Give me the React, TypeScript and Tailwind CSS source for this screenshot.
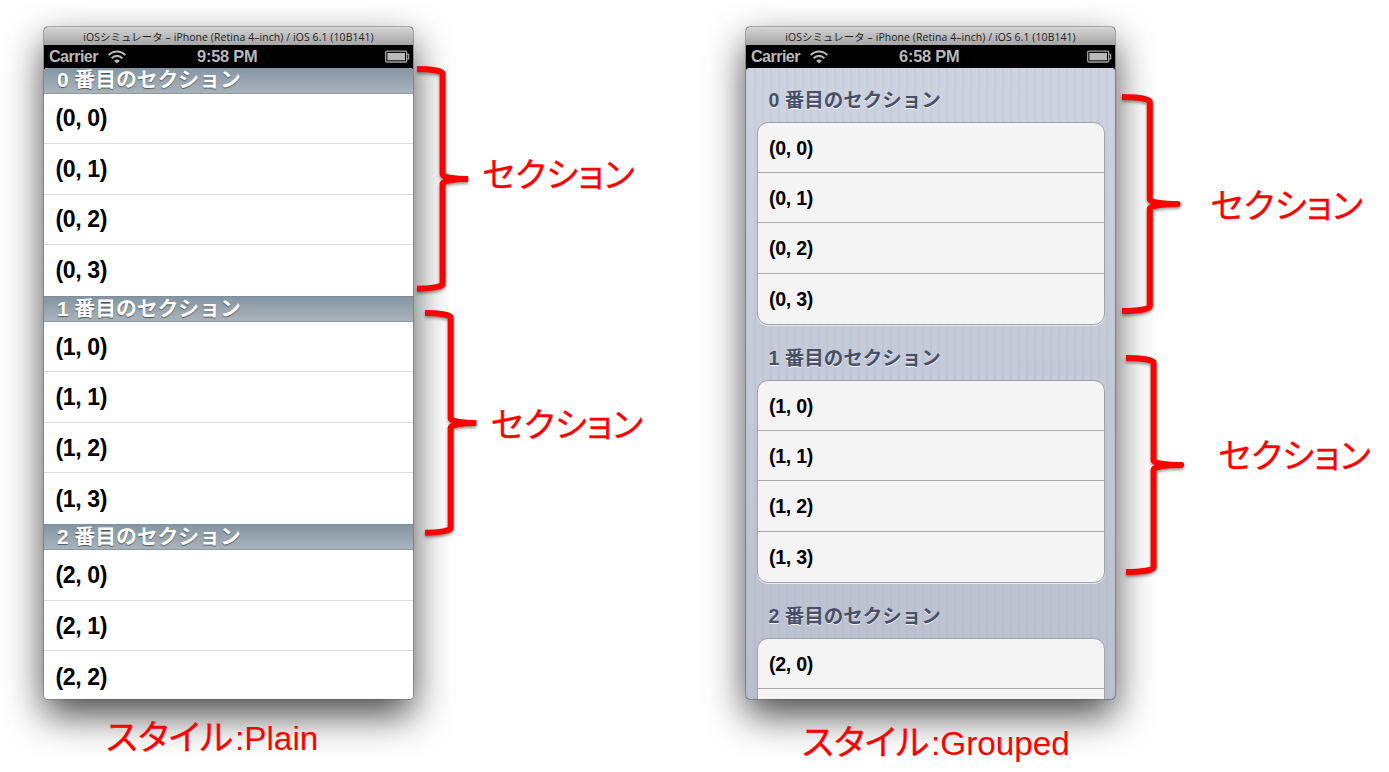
import React from "react";

const SANS = "font-['Liberation_Sans','Noto_Sans_CJK_JP',sans-serif]";

function StatusBar({ time }: { time: string }) {
  return (
    <div className="flex h-[23px] shrink-0 items-center bg-black pl-[5px] text-[#b9b9b9]">
      <span className="w-[50px] text-[16.2px] font-bold leading-[23px] tracking-[-0.6px]">Carrier</span>
      <svg width="18" height="14" viewBox="0 0 18 14" className="ml-[9px]" fill="none" stroke="currentColor">
        <path d="M0.7 5.1 C5.3 0.3 12.7 0.3 17.3 5.1" strokeWidth="2.1" />
        <path d="M3.7 8.2 C6.8 5.1 11.2 5.1 14.3 8.2" strokeWidth="2.1" />
        <path d="M9 13.6 L6.1 10.7 C7.9 9.1 10.1 9.1 11.9 10.7 Z" fill="currentColor" stroke="none" />
      </svg>
      <span className="ml-[71px] w-[144px] text-[16.4px] font-bold leading-[23px] tracking-[-0.2px]">{time}</span>
      <svg width="25" height="14" viewBox="0 0 25 14" className="ml-[44px] shrink-0">
        <rect x="0.7" y="1.2" width="21" height="10.8" rx="1.2" fill="none" stroke="#a5a5a5" strokeWidth="1.3" />
        <rect x="2.4" y="2.9" width="17.6" height="7.4" fill="#b9b9b9" />
        <path d="M22.2 4.4 h1.5 v4.4 h-1.5" fill="none" stroke="#a5a5a5" strokeWidth="1.2" />
      </svg>
    </div>
  );
}

function Simulator({ time, children }: { time: string; children: React.ReactNode }) {
  return (
    <div className="flex h-[672px] w-[369px] flex-col overflow-hidden rounded-[4px] bg-black shadow-[0_0_0_0.8px_rgba(90,90,90,0.6),0_16px_38px_rgba(0,0,0,0.72)]">
      <div className="flex h-[18px] shrink-0 items-center justify-center whitespace-nowrap border-t border-[#d8d8d8] bg-linear-to-b from-[#d2d2d2] to-[#a5a5a5] font-['Open_Sans','Noto_Sans_CJK_JP',sans-serif] text-[10.4px] leading-[16px] tracking-[0.11px] text-[#222]">
        iOSシミュレータ – iPhone (Retina 4–inch) / iOS 6.1 (10B141)
      </div>
      <StatusBar time={time} />
      {children}
    </div>
  );
}

function PlainSection({ index, rows }: { index: number; rows: number }) {
  return (
    <section className="shrink-0">
      <h2 className="flex h-[26.3px] items-center border-y border-t-[#7e8e9a] border-b-[#8c9aa6] bg-linear-to-b from-[#8596a2] to-[#a9b3bb] pl-[13px] text-[20.8px] font-bold leading-[24px] text-white [text-shadow:0_1px_1px_rgba(0,0,0,0.5)]">
        {index} 番目のセクション
      </h2>
      {Array.from({ length: rows }, (_, r) => (
        <div key={r} className="flex h-[50.5px] items-center border-b border-[#dedede] bg-white pl-[11.5px] pt-px text-[23.1px] font-bold tracking-[-0.4px] text-black last:border-b-0">
          ({index}, {r})
        </div>
      ))}
    </section>
  );
}

type GroupedProps = { index: number; rows: number; trailing?: boolean };

function GroupedSection({ index, rows, trailing }: GroupedProps) {
  return (
    <section className="shrink-0 px-[10.5px] pb-[9.6px]">
      <h2 className="flex h-[45px] items-center pl-[12px] pt-[2px] text-[19.5px] font-bold leading-[24px] text-[#475069] [text-shadow:0_1px_0_rgba(255,255,255,0.8)]">
        {index} 番目のセクション
      </h2>
      <div className="overflow-hidden rounded-[11px] border border-[#9fa1a6] bg-[#f4f4f4] shadow-[0_1px_0_rgba(255,255,255,0.6)]">
        {Array.from({ length: rows }, (_, r) => (
          <div key={r} className="flex h-[50.4px] items-center border-b border-[#a9a9a9] pl-[11.5px] pt-[2px] text-[19.6px] font-bold tracking-[-0.3px] text-black last:border-b-0">
            ({index}, {r})
          </div>
        ))}
        {trailing && <div className="h-[50.4px]" />}
      </div>
    </section>
  );
}

type BraceProps = { half: number; middle: number; height: number; round?: boolean };

function Brace({ half, middle, height, round }: BraceProps) {
  const ry = 4.5;
  const d = `M0 0 A${half} ${ry} 0 0 1 ${half} ${ry} V${middle - ry} A${half} ${ry} 0 0 0 ${half * 2} ${middle} A${half} ${ry} 0 0 0 ${half} ${middle + ry} V${height - ry} A${half} ${ry} 0 0 1 0 ${height}`;
  return (
    <svg
      width={half * 2}
      height={height}
      className="shrink-0 overflow-visible drop-shadow-[0_2px_1.5px_rgba(0,0,0,0.4)]"
      fill="none"
      stroke="#ff0000"
      strokeWidth="6"
      strokeLinejoin={round ? "round" : "bevel"}
    >
      <path d={d} />
    </svg>
  );
}

const KANA = "font-['Noto_Sans_CJK_JP',sans-serif] [font-feature-settings:'palt'] [-webkit-text-stroke:0.3px_#ff0000]";

function Label() {
  return <span className={`${KANA} whitespace-nowrap text-[34.6px] leading-[36px] text-[#ff0000]`}>セクション</span>;
}

function Caption({ name }: { name: string }) {
  return (
    <figcaption className="flex items-baseline whitespace-nowrap text-[#ff0000]">
      <span className={`${KANA} w-[129px] text-[35.4px] leading-[40px]`}>スタイル</span>
      <span className="text-[33.3px] leading-[40px]">:{name}</span>
    </figcaption>
  );
}

export default function App() {
  return (
    <main className={`${SANS} flex h-[772px] w-[1389px] overflow-hidden bg-white`}>
      <figure className="ml-[44px] w-[370px] shrink-0 pt-[27px]">
        <Simulator time="9:58 PM">
          <div className="flex min-h-0 flex-1 flex-col overflow-hidden rounded-t-[3px] bg-white">
            <div className="-mt-[0.8px]">
              <PlainSection index={0} rows={4} />
              <PlainSection index={1} rows={4} />
              <PlainSection index={2} rows={3} />
            </div>
          </div>
        </Simulator>
        <div className="pl-[62px] pt-[16px]">
          <Caption name="Plain" />
        </div>
      </figure>

      <div className="relative flex w-[332px] shrink-0 flex-col pt-[69px]">
        <div className="flex pl-[3px]">
          <Brace half={25.6} middle={110} height={219.7} />
          <div className="pl-[14px] pt-[85px]"><Label /></div>
        </div>
        <div className="mt-[24.6px] flex pl-[10.5px]">
          <Brace half={25.7} middle={110} height={219.7} />
          <div className="pl-[15px] pt-[91px]"><Label /></div>
        </div>
      </div>

      <figure className="w-[370px] shrink-0 pt-[27px]">
        <Simulator time="6:58 PM">
          <div className="flex min-h-0 flex-1 flex-col overflow-hidden rounded-t-[3px] bg-[repeating-linear-gradient(90deg,rgba(90,105,140,0.05)_0px,rgba(90,105,140,0.05)_2px,transparent_2px,transparent_8px),linear-gradient(#ced3e0,#bac0ce)] pt-[8.5px]">
            <GroupedSection index={0} rows={4} />
            <GroupedSection index={1} rows={4} />
            <GroupedSection index={2} rows={1} trailing />
          </div>
        </Simulator>
        <div className="pl-[56px] pt-[21px]">
          <Caption name="Grouped" />
        </div>
      </figure>

      <div className="relative flex shrink-0 flex-col pt-[96.5px]">
        <div className="flex pl-[6px]">
          <Brace half={27.8} middle={107} height={214} round />
          <div className="pl-[33px] pt-[88px]"><Label /></div>
        </div>
        <div className="mt-[47.5px] flex pl-[10px]">
          <Brace half={27.6} middle={107} height={214} round />
          <div className="pl-[37px] pt-[77px]"><Label /></div>
        </div>
      </div>
    </main>
  );
}
